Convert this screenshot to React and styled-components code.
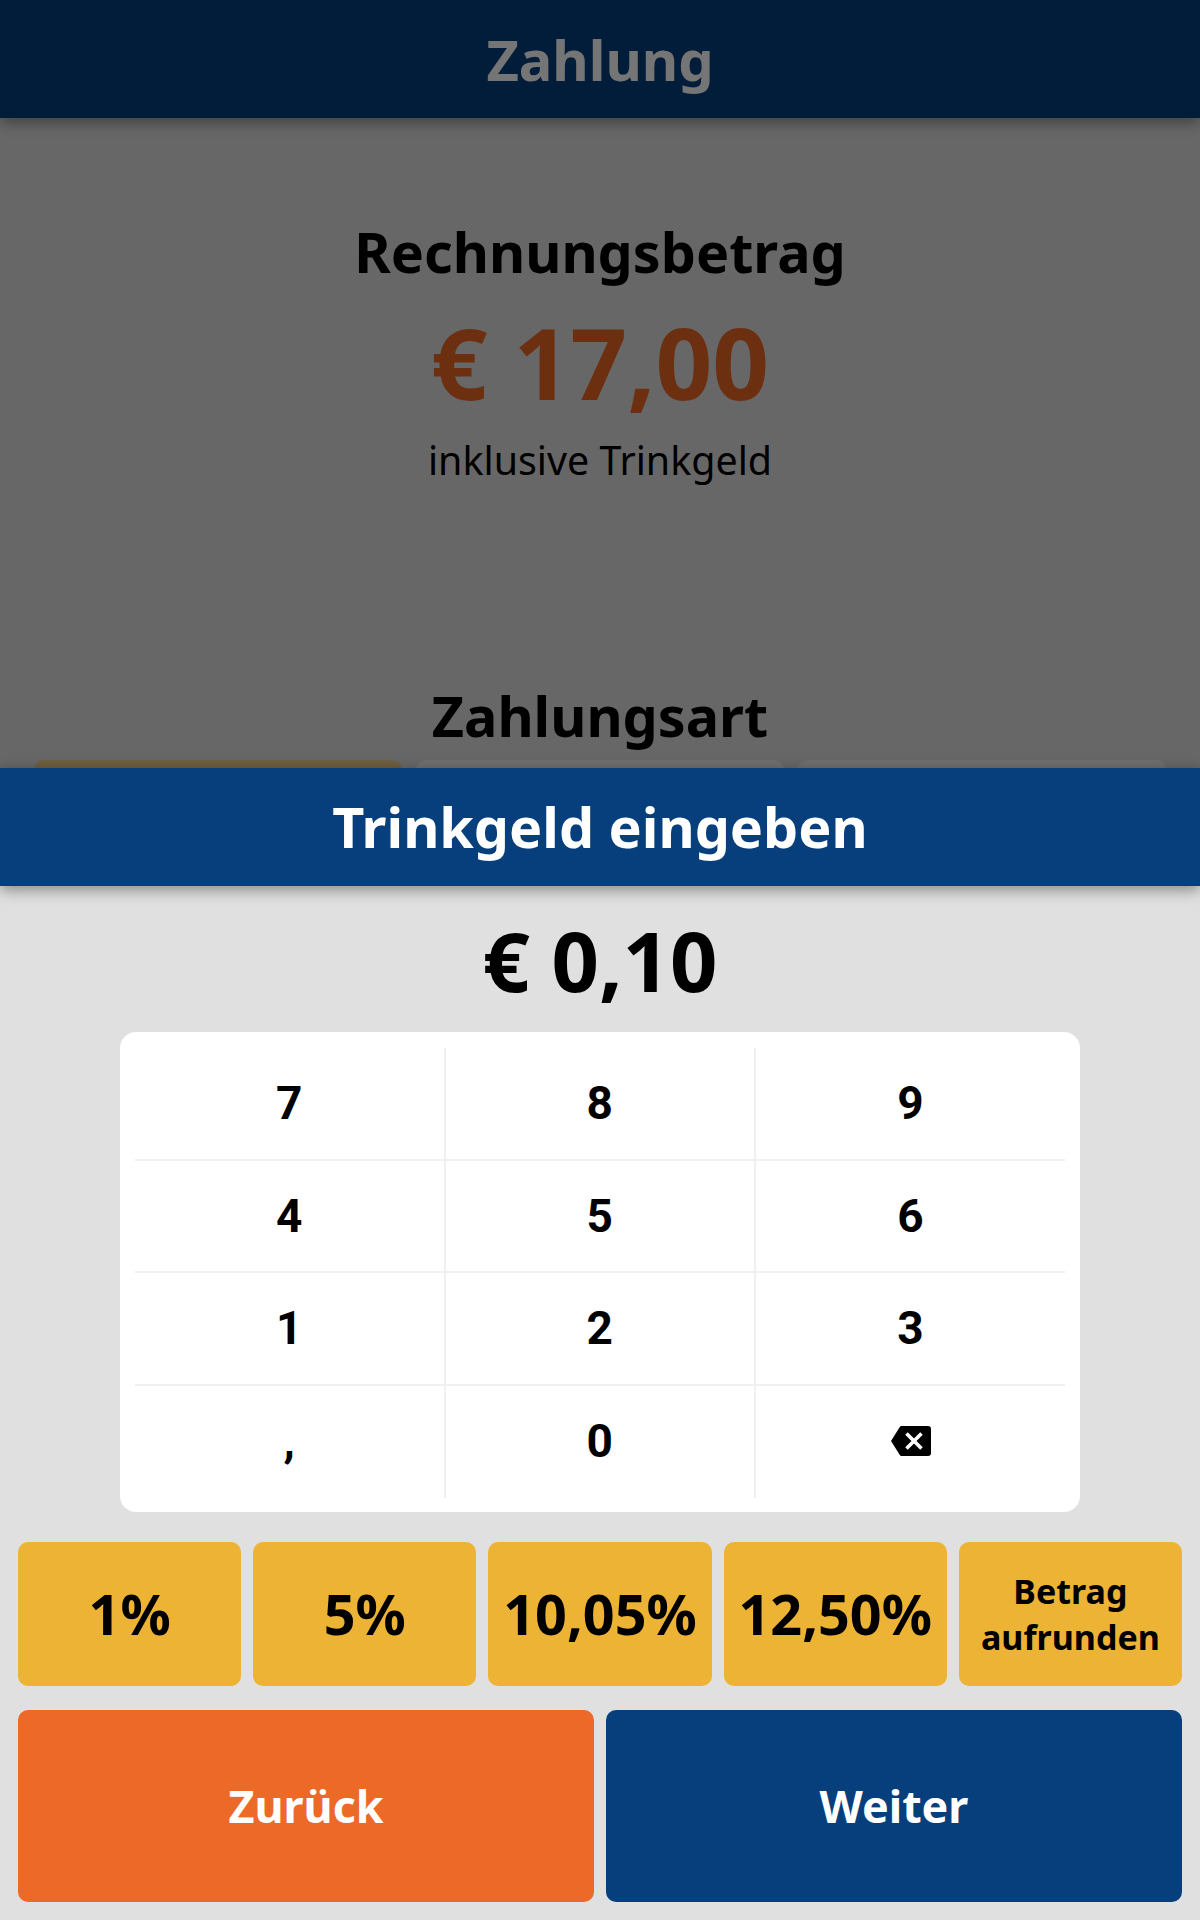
import React from 'react'
import styled, { createGlobalStyle } from 'styled-components'

const GlobalStyle = createGlobalStyle`
  html, body {
    margin: 0;
    padding: 0;
    background: #e0e0e0;
    font-family: "Noto Sans", sans-serif;
  }
  * {
    box-sizing: border-box;
  }
`

const PageDiv = styled.div`
  width: 1200px;
  height: 1920px;
  overflow: hidden;
  background: #e0e0e0;
`

const TopBar = styled.header`
  height: 118px;
  background: #063f7c;
  color: #fff;
  font-size: 56px;
  font-weight: 700;
  display: flex;
  align-items: center;
  justify-content: center;
  box-shadow: 0 4px 14px rgba(0, 0, 0, 0.4);
`

const Summary = styled.section`
  display: flex;
  flex-direction: column;
  align-items: center;
  padding-top: 98px;
`

const SectionTitle = styled.h2`
  margin: 0;
  font-size: 55.7px;
  line-height: 70px;
  font-weight: 700;
  color: #000;
`

const BillAmount = styled.div`
  font-size: 99.4px;
  line-height: 130px;
  font-weight: 700;
  color: #ec6927;
  margin-top: 11px;
`

const BillNote = styled.div`
  font-size: 39.4px;
  line-height: 52px;
  color: #000;
  margin-top: 7px;
`

const PaymentSection = styled.section`
  display: flex;
  flex-direction: column;
  align-items: center;
  margin-top: 194px;
`

const PaymentRow = styled.div`
  display: flex;
  gap: 14px;
  margin-top: 10px;
`

const PaymentCard = styled.div`
  width: 368px;
  height: 140px;
  border-radius: 10px;
  background: ${(p) => (p.$active ? '#efd089' : '#f2f2f2')};
`

const Backdrop = styled.div`
  position: fixed;
  inset: 0;
  background: rgba(0, 0, 0, 0.54);
`

const Sheet = styled.div`
  position: fixed;
  left: 0;
  right: 0;
  bottom: 0;
  height: 1152px;
  background: #e0e0e0;
  display: flex;
  flex-direction: column;
  align-items: center;
`

const SheetHeader = styled.div`
  width: 100%;
  height: 118px;
  flex: none;
  padding-bottom: 2px;
  background: #063f7c;
  color: #fff;
  font-size: 55.7px;
  font-weight: 700;
  display: flex;
  align-items: center;
  justify-content: center;
  box-shadow: 0 4px 14px rgba(0, 0, 0, 0.4);
`

const TipAmount = styled.div`
  height: 146px;
  flex: none;
  font-size: 83px;
  font-weight: 700;
  color: #000;
  display: flex;
  align-items: center;
  justify-content: center;
`

const Keypad = styled.div`
  width: 960px;
  height: 480px;
  flex: none;
  padding: 16px 15px 14px;
  background: #fff;
  border-radius: 16px;
  display: grid;
  grid-template-columns: 310.5px 310.5px 309px;
  grid-auto-rows: 112.6px;
`

const Key = styled.button`
  border: 0;
  padding: 0 0 ${(p) => (p.$lastRow ? '2px' : '0')};
  background: transparent;
  color: #000;
  font-family: Roboto, sans-serif;
  font-size: 46px;
  font-weight: 700;
  display: flex;
  align-items: center;
  justify-content: center;
  border-right: ${(p) => (p.$lastCol ? '0' : '2px solid #f0f0f0')};
  border-bottom: ${(p) => (p.$lastRow ? '0' : '2px solid #f0f0f0')};
`

const ButtonGroups = styled.div`
  width: 100%;
  padding: 30px 18px 0;
  display: flex;
  flex-direction: column;
  gap: 24px;
`

const PercentRow = styled.div`
  display: grid;
  grid-template-columns: repeat(5, 1fr);
  gap: 12px;
  height: 144px;
`

const PercentButton = styled.button`
  border: 0;
  padding: 0 0 ${(p) => (p.$small ? '0' : '2px')};
  border-radius: 10px;
  background: #ecb334;
  color: #000;
  font-family: "Noto Sans", sans-serif;
  font-weight: 700;
  font-size: ${(p) => (p.$small ? '34px' : '55.7px')};
  line-height: ${(p) => (p.$small ? '46px' : '1.2')};
  white-space: ${(p) => (p.$small ? 'normal' : 'nowrap')};
`

const ActionRow = styled.div`
  display: grid;
  grid-template-columns: 1fr 1fr;
  gap: 12px;
  height: 192px;
`

const ActionButton = styled.button`
  border: 0;
  padding: 0 0 2px;
  border-radius: 10px;
  background: ${(p) => p.$bg};
  color: #fff;
  font-family: "Noto Sans", sans-serif;
  font-size: 44.8px;
  font-weight: 700;
`

const keys = ['7', '8', '9', '4', '5', '6', '1', '2', '3', ',', '0', 'back']
const percents = ['1%', '5%', '10,05%', '12,50%']

function BackspaceIcon() {
  return (
    <svg width="40" height="30" viewBox="0 0 40 30">
      <path
        d="M10.5 0H37a3 3 0 0 1 3 3v24a3 3 0 0 1-3 3H10.5a2 2 0 0 1-1.7-.9L0 15 8.8.9A2 2 0 0 1 10.5 0z"
        fill="#000"
      />
      <path d="M15.5 7.5l15 15M30.5 7.5l-15 15" stroke="#fff" strokeWidth="3.6" fill="none" />
    </svg>
  )
}

export default function App() {
  return (
    <>
      <GlobalStyle />
      <PageDiv>
        <TopBar>Zahlung</TopBar>
        <Summary>
          <SectionTitle>Rechnungsbetrag</SectionTitle>
          <BillAmount>€ 17,00</BillAmount>
          <BillNote>inklusive Trinkgeld</BillNote>
        </Summary>
        <PaymentSection>
          <SectionTitle>Zahlungsart</SectionTitle>
          <PaymentRow>
            <PaymentCard $active />
            <PaymentCard />
            <PaymentCard />
          </PaymentRow>
        </PaymentSection>
      </PageDiv>
      <Backdrop />
      <Sheet>
        <SheetHeader>Trinkgeld eingeben</SheetHeader>
        <TipAmount>€ 0,10</TipAmount>
        <Keypad>
          {keys.map((k, i) => (
            <Key key={k} $lastCol={i % 3 === 2} $lastRow={i >= 9}>
              {k === 'back' ? <BackspaceIcon /> : k}
            </Key>
          ))}
        </Keypad>
        <ButtonGroups>
          <PercentRow>
            {percents.map((p) => (
              <PercentButton key={p}>{p}</PercentButton>
            ))}
            <PercentButton $small>
              Betrag
              <br />
              aufrunden
            </PercentButton>
          </PercentRow>
          <ActionRow>
            <ActionButton $bg="#ec6927">Zurück</ActionButton>
            <ActionButton $bg="#063f7c">Weiter</ActionButton>
          </ActionRow>
        </ButtonGroups>
      </Sheet>
    </>
  )
}
